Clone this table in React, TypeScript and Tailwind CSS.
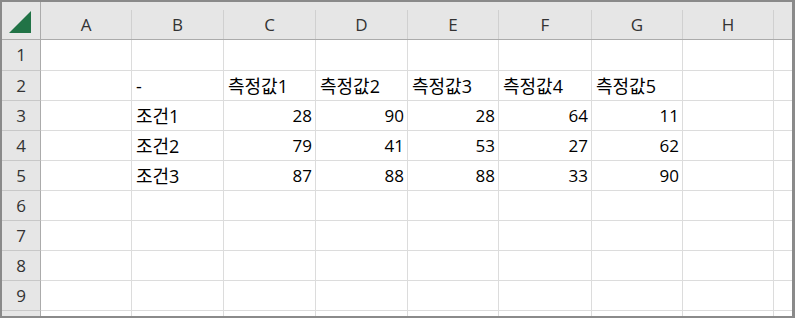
const font = { fontFamily: '"Open Sans", "Noto Sans CJK KR", sans-serif' }

const columns = [
  { label: 'A', width: 'w-[91px]' },
  { label: 'B', width: 'w-[92px]' },
  { label: 'C', width: 'w-[92px]' },
  { label: 'D', width: 'w-[92px]' },
  { label: 'E', width: 'w-[91px]' },
  { label: 'F', width: 'w-[93px]' },
  { label: 'G', width: 'w-[91px]' },
  { label: 'H', width: 'w-[91px]' },
]

// cell values by row, columns A..H
const rows: (string | number)[][] = [
  [],
  ['', '-', '측정값1', '측정값2', '측정값3', '측정값4', '측정값5'],
  ['', '조건1', 28, 90, 28, 64, 11],
  ['', '조건2', 79, 41, 53, 27, 62],
  ['', '조건3', 87, 88, 88, 33, 90],
  [],
  [],
  [],
  [],
]

function HeaderRow() {
  return (
    <div className="flex h-[38px] shrink-0 bg-[#e6e6e6] border-b border-[#ababab]">
      <div className="w-[39px] shrink-0 border-r border-[#ababab] flex items-center justify-center">
        <svg width="22" height="22" viewBox="0 0 22 22" className="mt-[2px] ml-[-3px]">
          <polygon points="0,22 22,22 22,0" fill="#217346" />
        </svg>
      </div>
      {columns.map((c) => (
        <div key={c.label} className={`${c.width} shrink-0 flex`}>
          <div className="flex-1 flex items-center justify-center pt-[9px] text-[17px] text-[#333]">
            {c.label}
          </div>
          <div className="w-px mt-[8px] bg-[#d0d0d0]" />
        </div>
      ))}
      <div className="flex-1" />
    </div>
  )
}

function Row({ num, cells, height }: { num: number; cells: (string | number)[]; height: string }) {
  return (
    <div className={`flex ${height} shrink-0`}>
      <div className="w-[39px] shrink-0 bg-[#e6e6e6] border-r border-b border-r-[#ababab] border-b-[#c8c8c8] flex items-center justify-center text-[17px] text-[#333]">
        {num}
      </div>
      {columns.map((c, i) => {
        const v = cells[i]
        const isNum = typeof v === 'number'
        return (
          <div
            key={c.label}
            className={`${c.width} shrink-0 border-r border-b border-[#dcdcdc] flex items-center pt-[1px] text-black ${
              isNum ? 'justify-end pr-[3px] text-[17px]' : 'justify-start pl-[4px] text-[18px]'
            }`}
          >
            {v ?? ''}
          </div>
        )
      })}
      <div className="flex-1 border-b border-[#dcdcdc]" />
    </div>
  )
}

export default function App() {
  return (
    <div
      className="w-[795px] h-[318px] bg-white border-2 border-r-[3px] border-[#8a8a8a] overflow-hidden flex flex-col"
      style={font}
    >
      <HeaderRow />
      {rows.map((cells, i) => (
        <Row key={i} num={i + 1} cells={cells} height={i === 0 ? 'h-[31px]' : 'h-[30px]'} />
      ))}
      <div className="flex h-[6px] shrink-0">
        <div className="w-[39px] shrink-0 bg-[#e6e6e6] border-r border-[#ababab]" />
        {columns.map((c) => (
          <div key={c.label} className={`${c.width} shrink-0 border-r border-[#dcdcdc]`} />
        ))}
        <div className="flex-1" />
      </div>
    </div>
  )
}
